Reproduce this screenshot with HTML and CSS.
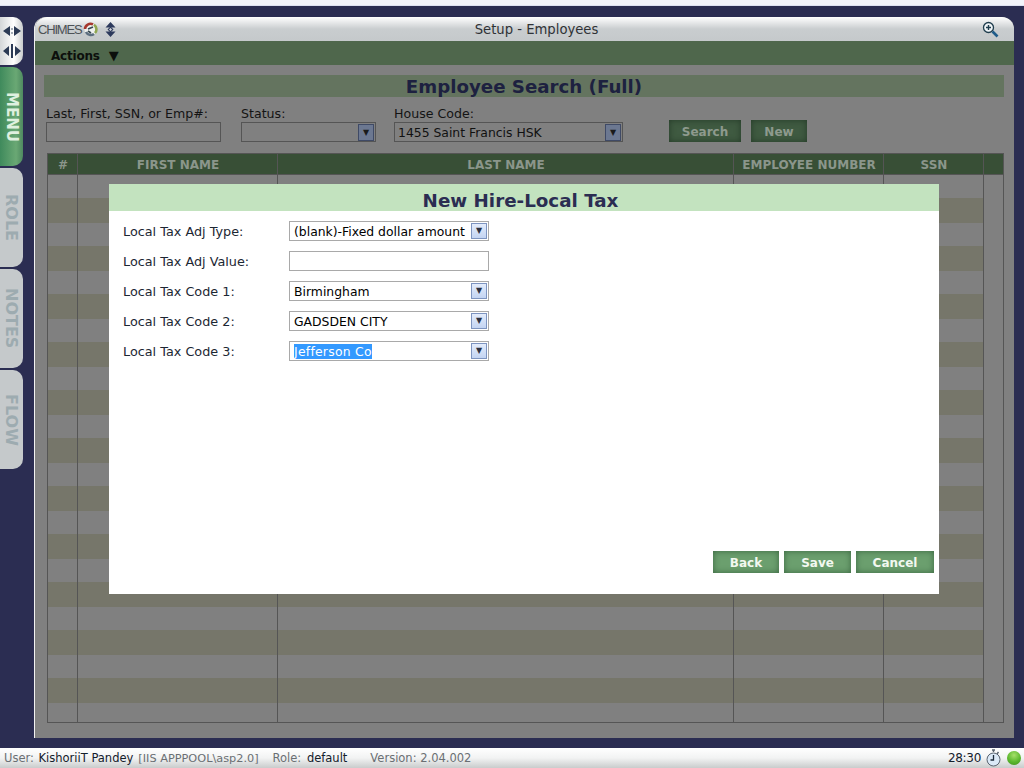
FILE: index.html
```html
<!DOCTYPE html>
<html lang="en">

<head>
    <meta charset="UTF-8">
    <title>Setup - Employees</title>
    <link rel="stylesheet" href="styles.css">
</head>

<body>
    <div class="topStrip"></div>

    <div class="mainRow">
        <div class="rail">
            <div class="railArrows">
                <svg width="18" height="10" viewBox="0 0 18 10">
                    <path d="M0 5 L7 0 V10 Z M18 5 L11 0 V10 Z" fill="#2b3a55"/>
                    <path d="M9 2 V4 M9 6 V8" stroke="#6d7a8a" stroke-width="1.2"/>
                </svg>
                <svg width="20" height="14" viewBox="0 0 20 14">
                    <path d="M1 7 L7 2 V12 Z M19 7 L13 2 V12 Z" fill="#2b3a55"/>
                    <path d="M10 0 V14" stroke="#2b3a55" stroke-width="2"/>
                </svg>
            </div>
            <div class="tab tabActive">MENU</div>
            <div class="tab">ROLE</div>
            <div class="tab">NOTES</div>
            <div class="tab">FLOW</div>
        </div>

        <div class="window">
            <div class="titleBar">
                <div class="logo">
                    <span class="logoText">CHIMES</span>
                    <svg width="15" height="15" viewBox="0 0 15 15" fill="none" stroke-width="2.6">
                        <circle cx="7.5" cy="7.5" r="6" fill="#eef0ee" stroke="none"/>
                        <path d="M2 7 A5.5 5.5 0 0 1 10 2.4" stroke="#a5372d"/>
                        <path d="M11 2.8 A5.5 5.5 0 0 1 12 11" stroke="#8fa650"/>
                        <path d="M11 12 A5.5 5.5 0 0 1 3 10" stroke="#5d6f80"/>
                        <path d="M5 7 L10 5 M5 9 L8 11" stroke="#37474f" stroke-width="1.6"/>
                    </svg>
                    <svg class="sortIcon" width="11" height="15" viewBox="0 0 11 15">
                        <path d="M5.5 0 L10.5 5.5 H0.5 Z M5.5 15 L10.5 9.5 H0.5 Z" fill="#2d3a5c"/>
                        <path d="M5.5 4.5 L8.5 7.5 L5.5 10.5 L2.5 7.5 Z" fill="#2d3a5c"/>
                        <path d="M5.5 6 L7 7.5 L5.5 9 L4 7.5 Z" fill="#d6d9dc"/>
                    </svg>
                </div>
                <div class="windowTitle">Setup - Employees</div>
                <svg class="zoomIcon" width="17" height="17" viewBox="0 0 17 17" fill="none">
                    <circle cx="6.5" cy="6.5" r="5" fill="#eef3f6" stroke="#1f3d4d" stroke-width="1.3"/>
                    <path d="M6.5 4 V9 M4 6.5 H9" stroke="#1f3d4d" stroke-width="1.4"/>
                    <path d="M10.5 10.5 L15.5 15.5" stroke="#1f5c8a" stroke-width="2.6"/>
                </svg>
            </div>

            <div class="actionsBar">Actions <span class="actionsArrow">▼</span></div>

            <div class="content">
                <h1 class="searchHeading">Employee Search (Full)</h1>

                <div class="searchForm">
                    <div class="field fieldName">
                        <label>Last, First, SSN, or Emp#:</label>
                        <div class="box"></div>
                    </div>
                    <div class="field fieldStatus">
                        <label>Status:</label>
                        <div class="box"><span class="boxArrow">▼</span></div>
                    </div>
                    <div class="field fieldHouse">
                        <label>House Code:</label>
                        <div class="box">1455 Saint Francis HSK<span class="boxArrow">▼</span></div>
                    </div>
                    <button class="darkBtn btnSearch">Search</button>
                    <button class="darkBtn btnNew">New</button>
                </div>

                <table class="grid">
                    <colgroup>
                        <col class="colNum"><col class="colFirst"><col class="colLast"><col class="colEmp"><col class="colSsn"><col class="colEnd">
                    </colgroup>
                    <thead>
                        <tr><th>#</th><th>FIRST NAME</th><th>LAST NAME</th><th>EMPLOYEE NUMBER</th><th>SSN</th><th></th></tr>
                    </thead>
                    <tbody>
                        <tr class="odd"><td></td><td></td><td></td><td></td><td></td><td></td></tr>
                        <tr class="even"><td></td><td></td><td></td><td></td><td></td><td></td></tr>
                        <tr class="odd"><td></td><td></td><td></td><td></td><td></td><td></td></tr>
                        <tr class="even"><td></td><td></td><td></td><td></td><td></td><td></td></tr>
                        <tr class="odd"><td></td><td></td><td></td><td></td><td></td><td></td></tr>
                        <tr class="even"><td></td><td></td><td></td><td></td><td></td><td></td></tr>
                        <tr class="odd"><td></td><td></td><td></td><td></td><td></td><td></td></tr>
                        <tr class="even"><td></td><td></td><td></td><td></td><td></td><td></td></tr>
                        <tr class="odd"><td></td><td></td><td></td><td></td><td></td><td></td></tr>
                        <tr class="even"><td></td><td></td><td></td><td></td><td></td><td></td></tr>
                        <tr class="odd"><td></td><td></td><td></td><td></td><td></td><td></td></tr>
                        <tr class="even"><td></td><td></td><td></td><td></td><td></td><td></td></tr>
                        <tr class="odd"><td></td><td></td><td></td><td></td><td></td><td></td></tr>
                        <tr class="even"><td></td><td></td><td></td><td></td><td></td><td></td></tr>
                        <tr class="odd"><td></td><td></td><td></td><td></td><td></td><td></td></tr>
                        <tr class="even"><td></td><td></td><td></td><td></td><td></td><td></td></tr>
                        <tr class="odd"><td></td><td></td><td></td><td></td><td></td><td></td></tr>
                        <tr class="even"><td></td><td></td><td></td><td></td><td></td><td></td></tr>
                        <tr class="odd"><td></td><td></td><td></td><td></td><td></td><td></td></tr>
                        <tr class="even"><td></td><td></td><td></td><td></td><td></td><td></td></tr>
                        <tr class="odd"><td></td><td></td><td></td><td></td><td></td><td></td></tr>
                        <tr class="even"><td></td><td></td><td></td><td></td><td></td><td></td></tr>
                        <tr class="last"><td></td><td></td><td></td><td></td><td></td><td></td></tr>
                    </tbody>
                </table>

                <!-- popup sits over the dimmed search page -->
                <div class="modal">
                    <h2 class="modalTitle">New Hire-Local Tax</h2>
                    <div class="modalBody">
                        <div class="modalRow">
                            <label>Local Tax Adj Type:</label>
                            <div class="lightBox">(blank)-Fixed dollar amount<span class="lightArrow">▼</span></div>
                        </div>
                        <div class="modalRow">
                            <label>Local Tax Adj Value:</label>
                            <div class="lightBox"></div>
                        </div>
                        <div class="modalRow">
                            <label>Local Tax Code 1:</label>
                            <div class="lightBox">Birmingham<span class="lightArrow">▼</span></div>
                        </div>
                        <div class="modalRow">
                            <label>Local Tax Code 2:</label>
                            <div class="lightBox">GADSDEN CITY<span class="lightArrow">▼</span></div>
                        </div>
                        <div class="modalRow">
                            <label>Local Tax Code 3:</label>
                            <div class="lightBox"><span class="selected">Jefferson Co</span><span class="lightArrow">▼</span></div>
                        </div>
                    </div>
                    <div class="modalButtons">
                        <button class="greenBtn btnBack">Back</button>
                        <button class="greenBtn btnSave">Save</button>
                        <button class="greenBtn btnCancel">Cancel</button>
                    </div>
                </div>
            </div>
        </div>
    </div>

    <div class="statusBar">
        <span class="statusItem statusUser">User: <b>KishoriiT Pandey</b></span>
        <span class="statusItem statusPool">[IIS APPPOOL\asp2.0]</span>
        <span class="statusItem statusRole">Role: <b>default</b></span>
        <span class="statusItem">Version: 2.04.002</span>
        <span class="statusClock">28:30</span>
        <svg class="stopwatch" width="15" height="18" viewBox="0 0 15 18" fill="none">
            <path d="M6 1 H9 M7.5 1 V3 M12.5 3 L11 5" stroke="#5a6470" stroke-width="1.4"/>
            <circle cx="7.5" cy="10.5" r="6.5" fill="#dbe9f7" stroke="#5a6470"/>
            <path d="M7.5 6 V11 H4.5" stroke="#1c2a3a" stroke-width="1.3"/>
        </svg>
        <span class="statusBall"></span>
    </div>
</body>

</html>
```

FILE: styles.css
```css
body {
    margin: 0;
    width: 1024px;
    height: 768px;
    overflow: hidden;
    display: flex;
    flex-direction: column;
    background-color: #2b2d52;
    font-family: "DejaVu Sans", Verdana, sans-serif;
    font-size: 12px;
    color: #111;
}

.topStrip {
    height: 5px;
    background-color: #f3f4fb;
    border-bottom: 1px solid #dfe2f2;
}

.mainRow {
    display: flex;
    height: 721px;
    margin-top: 11px;
}

/* left rail */
.rail {
    width: 24px;
    margin-right: 10px;
    display: flex;
    flex-direction: column;
    gap: 2px;
}

.railArrows {
    width: 23px;
    height: 48px;
    box-sizing: border-box;
    padding-top: 9px;
    display: flex;
    flex-direction: column;
    align-items: center;
    gap: 8px;
    background: linear-gradient(90deg, #d4d7d9 0%, #ffffff 60%, #c9cccd 100%);
    border-radius: 0 10px 10px 0;
}

.tab {
    width: 23px;
    height: 99px;
    display: flex;
    align-items: center;
    justify-content: center;
    writing-mode: vertical-rl;
    font-size: 16px;
    font-weight: bold;
    color: #9dabb0;
    background-color: #c5c9cb;
    border-radius: 0 10px 10px 0;
}

.tabActive {
    font-size: 15px;
    color: #dff0df;
    background: linear-gradient(90deg, #3f8a5c 0%, #6aa874 70%, #4e8a60 100%);
}

/* window */
.window {
    width: 980px;
    position: relative;
    display: flex;
    flex-direction: column;
    border-left: 1px solid #f2f2f2;
    box-sizing: border-box;
    background-color: #808080;
    border-radius: 12px 12px 0 0;
}

.titleBar {
    height: 24px;
    flex-shrink: 0;
    display: flex;
    align-items: center;
    position: relative;
    background: linear-gradient(180deg, #ffffff 0%, #c9cdcf 50%, #c5c9cb 100%);
    border-radius: 12px 12px 0 0;
}

.logo {
    display: flex;
    align-items: center;
    margin-left: 3px;
}

.logoText {
    font-family: "Liberation Sans", Arial, sans-serif;
    font-size: 13px;
    letter-spacing: -1.2px;
    color: #4d5256;
    margin-right: 2px;
}

.sortIcon {
    margin-left: 7px;
}

.windowTitle {
    position: absolute;
    left: 24px;
    right: 0;
    text-align: center;
    font-size: 13.2px;
    color: #2f3236;
}

.zoomIcon {
    margin-left: auto;
    margin-right: 15px;
}

.actionsBar {
    height: 24px;
    flex-shrink: 0;
    box-sizing: border-box;
    padding: 7px 0 0 16px;
    background-color: #4f674c;
    font-size: 12px;
    letter-spacing: -0.2px;
    font-weight: bold;
    color: #0c0f0c;
}

.actionsArrow {
    margin-left: 5px;
    font-size: 13px;
}

.content {
    padding: 10px 10px 0 9px;
}

.searchHeading {
    margin: 0;
    height: 22px;
    line-height: 23px;
    text-align: center;
    font-size: 18.2px;
    background-color: #64745f;
    color: #1d2140;
}

/* search form */
.searchForm {
    display: flex;
    align-items: flex-end;
    margin: 9px 0 11px 2px;
}

.field label {
    display: block;
    height: 16px;
    font-size: 12.6px;
    color: #141414;
}

.box {
    position: relative;
    height: 20px;
    box-sizing: border-box;
    border: 1px solid #555;
    padding-left: 3px;
    line-height: 19px;
    font-size: 12.4px;
    color: #111;
}

.fieldName { width: 175px; margin-right: 20px; }
.fieldStatus { width: 135px; margin-right: 18px; }
.fieldHouse { width: 229px; margin-right: 46px; }

.boxArrow {
    position: absolute;
    right: 1px;
    top: 1px;
    width: 14px;
    height: 15px;
    line-height: 15px;
    text-align: center;
    font-size: 8px;
    color: #1a1a1a;
    background-color: #6c7891;
    border: 1px solid #3f4a66;
}

.darkBtn {
    height: 22px;
    padding: 2px 0 0;
    border: none;
    font-family: inherit;
    font-size: 12px;
    font-weight: bold;
    color: #8e9a8e;
    background-color: #3f5a41;
    box-shadow: inset 0 0 6px #243a27;
}

.btnSearch { width: 72px; margin-right: 10px; }
.btnNew { width: 56px; }

/* employee table */
.grid {
    width: 957px;
    margin-left: 3px;
    table-layout: fixed;
    border-collapse: collapse;
    border: 1px solid #555;
}

.colNum { width: 30px; }
.colFirst { width: 200px; }
.colLast { width: 456px; }
.colEmp { width: 150px; }
.colSsn { width: 100px; }
.colEnd { width: 20px; }

.grid th {
    height: 21px;
    box-sizing: border-box;
    padding: 2px 0 0 1px;
    border: 1px solid #555;
    background-color: #384f36;
    font-size: 12px;
    color: #8b968b;
}

.grid td {
    padding: 0;
    border-left: 1px solid #555;
    border-right: 1px solid #555;
}

.even td { height: 25px; background-color: #76766a; }
.odd td { height: 23px; }
.last td { height: 19px; }

.grid td:last-child { background-color: #808080; }

/* new hire popup */
.modal {
    position: absolute;
    left: 74px;
    top: 167px;
    width: 830px;
    height: 410px;
    display: flex;
    flex-direction: column;
    background-color: #fff;
}

.modalTitle {
    margin: 0;
    height: 27px;
    padding-right: 7px;
    line-height: 33px;
    text-align: center;
    font-size: 18.3px;
    background-color: #c3e3bf;
    color: #2b2d52;
}

.modalBody {
    padding: 10px 0 0 14px;
    display: flex;
    flex-direction: column;
    gap: 10px;
}

.modalRow {
    display: flex;
    align-items: center;
    height: 20px;
}

.modalRow label {
    width: 166px;
    font-size: 12.8px;
    color: #1c2733;
}

.lightBox {
    position: relative;
    width: 200px;
    height: 20px;
    box-sizing: border-box;
    border: 1px solid #a9a9a9;
    padding-left: 4px;
    line-height: 20px;
    font-size: 12.4px;
    color: #000;
    white-space: nowrap;
}

.lightArrow {
    position: absolute;
    right: 1px;
    top: 1px;
    width: 14px;
    height: 14px;
    line-height: 14px;
    text-align: center;
    font-size: 8px;
    color: #2b3140;
    background: linear-gradient(180deg, #e3ecfb 0%, #c3d4f2 100%);
    border: 1px solid #7d94c0;
}

.selected {
    letter-spacing: 0.25px;
    background-color: #3399ff;
    color: #fff;
}

.modalButtons {
    margin-top: auto;
    padding: 0 5px 21px 0;
    display: flex;
    justify-content: flex-end;
    gap: 5px;
}

.greenBtn {
    height: 22px;
    padding: 2px 0 0;
    border: none;
    font-family: inherit;
    font-size: 12px;
    font-weight: bold;
    color: #f2f8f0;
    background-color: #6b9f6e;
    box-shadow: inset 0 0 6px #3a6540;
}

.btnBack { width: 66px; }
.btnSave { width: 67px; }
.btnCancel { width: 78px; }

/* status bar */
.statusBar {
    height: 20px;
    margin-top: 10px;
    display: flex;
    align-items: center;
    padding-left: 4px;
    background: linear-gradient(180deg, #ffffff 0%, #f2f3f3 50%, #c9cccc 100%);
    font-size: 11.5px;
    color: #6a6f73;
}

.statusItem b {
    font-weight: normal;
    color: #14202c;
    margin-left: 1px;
}

.statusUser { margin-right: 5px; }
.statusPool { font-size: 11.3px; margin-right: 14px; }
.statusRole { margin-right: 23px; }
.statusRole b { margin-left: 2px; }

.statusClock {
    margin-left: auto;
    margin-right: 5px;
    font-size: 12px;
    letter-spacing: -0.3px;
    color: #14202c;
}

.stopwatch {
    margin-right: 6px;
}

.statusBall {
    width: 14px;
    height: 14px;
    margin-right: 3px;
    border-radius: 50%;
    background: radial-gradient(circle at 50% 30%, #a6e06a 0%, #5cb82e 55%, #3e8f1c 100%);
}
```
